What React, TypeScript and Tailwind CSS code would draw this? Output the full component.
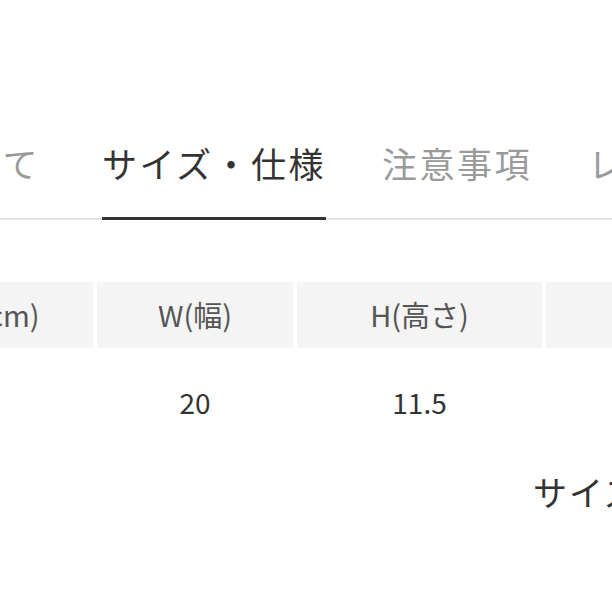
const font = { fontFamily: '"Noto Sans CJK JP", "Noto Sans", sans-serif' }

const tabs = [
  { label: 'について', active: false, extra: 'mr-[6px]' },
  { label: 'サイズ・仕様', active: true, extra: '' },
  { label: '注意事項', active: false, extra: '' },
  { label: 'レビュー', active: false, extra: '' },
]

function Tabs() {
  return (
    <div className="ml-[-109px] mt-[146px] flex w-[900px] items-start gap-[56px] border-b-2 border-[#e3e3e3]">
      {tabs.map((t) => (
        <span
          key={t.label}
          className={
            t.active
              ? 'mb-[-2px] border-b-[3px] border-[#333] pb-[37px] text-[35px] leading-[34px] tracking-[2.5px] whitespace-nowrap text-[#333]'
              : `pb-[37px] text-[35px] leading-[34px] tracking-[2.5px] whitespace-nowrap text-[#9a9a9a] ${t.extra}`
          }
        >
          {t.label}
        </span>
      ))}
    </div>
  )
}

function SizeTable() {
  const cols = [
    { head: 'サイズ(cm)', value: '', width: 'w-[218px]', pad: 'pr-[36px]' },
    { head: 'W(幅)', value: '20', width: 'w-[196px]', pad: '' },
    { head: 'H(高さ)', value: '11.5', width: 'w-[245px]', pad: '' },
    { head: '', value: '', width: 'w-[230px]', pad: '' },
  ]
  return (
    <div className="ml-[-125px] mt-[62px] flex gap-[4px]">
      {cols.map((c, i) => (
        <div key={i} className={`${c.width} shrink-0`}>
          <div
            className={`flex h-[66px] items-center justify-center bg-[#f4f4f4] text-[29px] whitespace-nowrap text-[#555] ${c.pad}`}
          >
            {c.head}
          </div>
          <div className="flex h-[112px] items-center justify-center pb-[4px] text-[28px] text-[#333]">
            {c.value}
          </div>
        </div>
      ))}
    </div>
  )
}

export default function App() {
  return (
    <div className="h-[612px] w-[612px] overflow-hidden bg-white" style={font}>
      <Tabs />
      <SizeTable />
      <div className="ml-[533px] mt-[15px] text-[34px] leading-[34px] tracking-[2px] whitespace-nowrap text-[#333]">
        サイズ表記について
      </div>
    </div>
  )
}
